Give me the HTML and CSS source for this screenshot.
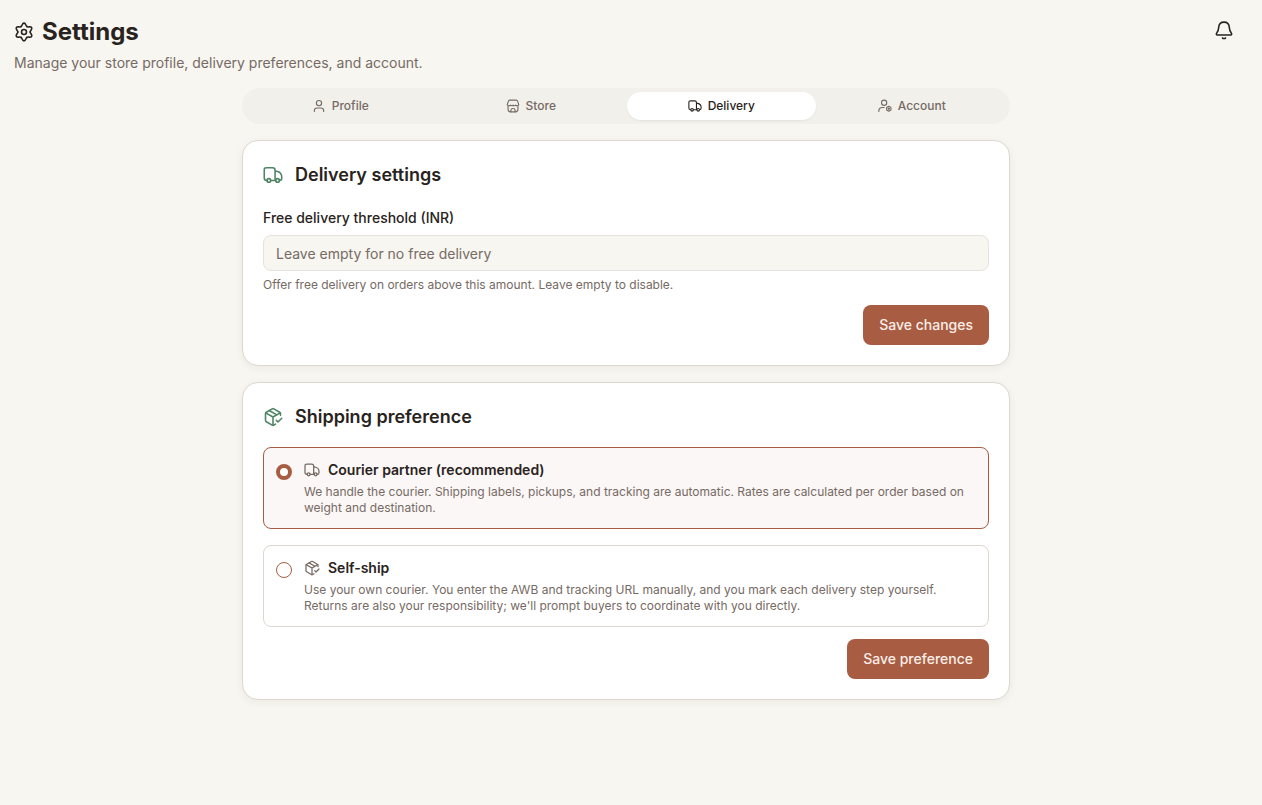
FILE: index.html
```html
<!DOCTYPE html>
<html lang="en">
<head>
<meta charset="utf-8">
<meta name="viewport" content="width=device-width, initial-scale=1">
<title>Settings</title>
<link rel="stylesheet" href="styles.css">
</head>
<body>
<svg class="sprite" aria-hidden="true">
  <symbol id="gear" viewBox="0 0 24 24">
    <path id="lobe" d="M8.300 5.600C10 4.800 9.600 1.400 12 1.400S14 4.800 15.700 5.600"/>
    <use href="#lobe" transform="rotate(60 12 12)"/>
    <use href="#lobe" transform="rotate(120 12 12)"/>
    <use href="#lobe" transform="rotate(180 12 12)"/>
    <use href="#lobe" transform="rotate(240 12 12)"/>
    <use href="#lobe" transform="rotate(300 12 12)"/>
    <circle cx="12" cy="12" r="3"/>
  </symbol>
  <symbol id="bell" viewBox="0 0 24 24">
    <path d="M12 2.500C8.500 2.500 6 5 5.700 8.400C5.400 11.800 5.100 13.300 3.600 15C2.500 16.300 2.400 18 4.300 18H19.700C21.600 18 21.500 16.300 20.400 15C18.900 13.300 18.600 11.800 18.300 8.400C18 5 15.500 2.500 12 2.500Z"/>
    <path d="M10.200 21.600C10.800 22.500 13.200 22.500 13.800 21.600"/>
  </symbol>
  <symbol id="user" viewBox="0 0 24 24">
    <circle cx="12" cy="7" r="4.500"/>
    <path d="M4 21.500V20C4 17 6 15.500 9 15.500H15C18 15.500 20 17 20 20V21.500"/>
  </symbol>
  <symbol id="store" viewBox="0 0 24 24">
    <path d="M3.500 11.500V17C3.500 20.500 4.500 22 8 22H16C19.500 22 20.500 20.500 20.500 17V11.500"/>
    <path d="M2 10L4 4C4.400 2.600 5 2 6.500 2H17.500C19 2 19.600 2.600 20 4L22 10C21 12 17.500 12 16.500 10.500C15 12 13 12 12 10.500C11 12 9 12 7.500 10.500C6.500 12 3 12 2 10Z"/>
    <path d="M8.500 22V18.500C8.500 17 9.500 16.200 12 16.200S15.500 17 15.500 18.500V22"/>
  </symbol>
  <symbol id="account" viewBox="0 0 24 24">
    <circle cx="10.500" cy="6.500" r="4.500"/>
    <path d="M1.500 21.500V20C1.500 17 4 14.500 7.500 14.500H10.500"/>
    <path d="M18.500 12.500L22.200 14.600V18.800L18.500 21L14.800 18.800V14.600Z"/>
    <circle cx="18.500" cy="16.700" r="1"/>
  </symbol>
  <symbol id="truck" viewBox="0 0 24 24">
    <circle cx="7" cy="18.500" r="2.200"/>
    <circle cx="17.500" cy="18.500" r="2.200"/>
    <path d="M4.800 18.500C2.500 18.500 1.500 18 1.500 15.500V6C1.500 3.800 2.200 3.200 4.500 3.200H11.500C13.800 3.200 14.500 3.800 14.500 6V18.500H9.200M14.500 7.500H16.500C20 8.200 22.500 11 22.500 14.500V16C22.500 18 21.800 18.500 19.700 18.500M14.500 18.500H15.300"/>
  </symbol>
  <symbol id="package" viewBox="0 0 24 24">
    <path d="M21 10V8a2 2 0 0 0-1-1.730l-7-4a2 2 0 0 0-2 0l-7 4A2 2 0 0 0 3 8v8a2 2 0 0 0 1 1.730l7 4a2 2 0 0 0 2 0l2-1.140"/>
    <path d="M7.500 4.270L16.500 9.420M3.290 7L12 12L20.710 7M12 22V12"/>
    <path d="M16 16L18 18L22.500 13.500"/>
  </symbol>
</svg>

<main class="page">
  <header class="page-header">
    <div>
      <h1 class="page-title"><svg class="icon icon-lg" aria-hidden="true"><use href="#gear"/></svg>Settings</h1>
      <p class="page-subtitle">Manage your store profile, delivery preferences, and account.</p>
    </div>
    <button class="bell" type="button" aria-label="Notifications"><svg class="icon icon-lg" aria-hidden="true"><use href="#bell"/></svg></button>
  </header>

  <div class="content">
    <div class="tabs" role="tablist">
      <button class="tab" type="button" role="tab"><svg class="icon icon-sm" aria-hidden="true"><use href="#user"/></svg>Profile</button>
      <button class="tab" type="button" role="tab"><svg class="icon icon-sm" aria-hidden="true"><use href="#store"/></svg>Store</button>
      <button class="tab tab-active" type="button" role="tab" aria-selected="true"><svg class="icon icon-sm" aria-hidden="true"><use href="#truck"/></svg>Delivery</button>
      <button class="tab" type="button" role="tab"><svg class="icon icon-sm" aria-hidden="true"><use href="#account"/></svg>Account</button>
    </div>

    <form class="card">
      <h2 class="card-title"><svg class="icon icon-lg icon-green" aria-hidden="true"><use href="#truck"/></svg>Delivery settings</h2>
      <div class="field">
        <label class="label" for="threshold">Free delivery threshold (INR)</label>
        <input class="input" id="threshold" type="text" inputmode="numeric" placeholder="Leave empty for no free delivery" aria-describedby="threshold-help">
        <p class="help" id="threshold-help">Offer free delivery on orders above this amount. Leave empty to disable.</p>
      </div>
      <div class="actions"><button class="button" type="button">Save changes</button></div>
    </form>

    <form class="card">
      <h2 class="card-title"><svg class="icon icon-lg icon-green" aria-hidden="true"><use href="#package"/></svg>Shipping preference</h2>
      <div class="options">
        <label class="option">
          <input class="radio" type="radio" name="shipping" checked>
          <span class="option-body">
            <span class="option-title"><svg class="icon icon-md" aria-hidden="true"><use href="#truck"/></svg>Courier partner (recommended)</span>
            <span class="option-text">We handle the courier. Shipping labels, pickups, and tracking are automatic. Rates are calculated per order based on weight and destination.</span>
          </span>
        </label>
        <label class="option">
          <input class="radio" type="radio" name="shipping">
          <span class="option-body">
            <span class="option-title"><svg class="icon icon-md" aria-hidden="true"><use href="#package"/></svg>Self-ship</span>
            <span class="option-text">Use your own courier. You enter the AWB and tracking URL manually, and you mark each delivery step yourself. Returns are also your responsibility; we'll prompt buyers to coordinate with you directly.</span>
          </span>
        </label>
      </div>
      <div class="actions"><button class="button" type="button">Save preference</button></div>
    </form>
  </div>
</main>
</body>
</html>
```
FILE: styles.css
```css
:root {
  --bg: #f7f6f1;
  --ink: #292320;
  --muted: #766a64;
  --line: #ddd7cf;
  --accent: #a85c42;
  --green: #4f8465;
}

* { box-sizing: border-box; }

body {
  margin: 0;
  background: var(--bg);
  color: var(--ink);
  font-family: Inter, "Liberation Sans", sans-serif;
  font-size: 14px;
  line-height: 20px;
}

h1, h2, p { margin: 0; }
button, input { font: inherit; }

.sprite { position: absolute; width: 0; height: 0; }

.icon {
  flex: none;
  fill: none;
  stroke: currentColor;
  stroke-width: 1.9;
  stroke-linecap: round;
  stroke-linejoin: round;
}
.icon-sm { width: 14px; height: 14px; }
.icon-md { width: 16px; height: 16px; color: var(--muted); }
.icon-lg { width: 20px; height: 20px; }
.icon-green { color: var(--green); }

.page { padding: 16px 24px 16px 14px; }

.page-header {
  display: flex;
  justify-content: space-between;
  align-items: flex-start;
}

.page-title {
  display: flex;
  align-items: center;
  gap: 8px;
  font-size: 24px;
  line-height: 32px;
  font-weight: 700;
}

.page-subtitle {
  margin-top: 4px;
  color: var(--muted);
  line-height: 22px;
}

.bell {
  display: flex;
  padding: 4px;
  border: 0;
  background: none;
  color: inherit;
}

.content {
  display: flex;
  flex-direction: column;
  gap: 16px;
  max-width: 768px;
  margin: 14px auto 0;
}

.tabs {
  display: grid;
  grid-template-columns: repeat(4, 1fr);
  gap: 2px;
  padding: 4px;
  border-radius: 18px;
  background: #f1f0eb;
}

.tab {
  display: flex;
  justify-content: center;
  align-items: center;
  gap: 6px;
  height: 28px;
  padding: 0 8px;
  border: 0;
  border-radius: 14px;
  background: none;
  color: var(--muted);
  font-size: 12px;
  font-weight: 500;
}

.tab-active {
  background: #fff;
  color: var(--ink);
  box-shadow: 0 1px 2px rgb(41 35 32 / 6%);
}

.card {
  padding: 20px;
  border: 1px solid var(--line);
  border-radius: 16px;
  background: #fff;
  box-shadow: 0 2px 8px rgb(41 35 32 / 6%);
}

.card-title {
  display: flex;
  align-items: center;
  gap: 12px;
  font-size: 18px;
  line-height: 28px;
  font-weight: 600;
}

.field { margin-top: 18px; }

.label {
  display: block;
  line-height: 22px;
  font-weight: 500;
}

.input {
  display: block;
  width: 100%;
  height: 36px;
  margin-top: 6px;
  padding: 0 12px;
  border: 1px solid #e7e3dc;
  border-radius: 8px;
  background: var(--bg);
  color: var(--ink);
}
.input::placeholder { color: var(--muted); opacity: 1; }

.help {
  margin-top: 6px;
  color: var(--muted);
  font-size: 12px;
  line-height: 16px;
}

.actions {
  display: flex;
  justify-content: flex-end;
  margin-top: 12px;
}

.button {
  height: 40px;
  padding: 0 16px;
  border: 0;
  border-radius: 8px;
  background: var(--accent);
  color: #fbeee8;
  font-weight: 500;
}

.options {
  display: grid;
  gap: 16px;
  margin-top: 16px;
}

.option {
  display: flex;
  align-items: flex-start;
  gap: 12px;
  padding: 12px;
  border: 1px solid var(--line);
  border-radius: 8px;
}
.option:has(:checked) {
  border-color: var(--accent);
  background: #fbf7f6;
}

.radio {
  appearance: none;
  flex: none;
  width: 16px;
  height: 16px;
  margin: 4px 0 0;
  border: 1px solid var(--accent);
  border-radius: 50%;
  background: #fff;
}
.radio:checked { border-width: 4px; }

.option-body {
  display: grid;
  gap: 4px;
}

.option-title {
  display: flex;
  align-items: center;
  gap: 8px;
  font-weight: 600;
}

.option-text {
  color: var(--muted);
  font-size: 12px;
  line-height: 16px;
}
```
